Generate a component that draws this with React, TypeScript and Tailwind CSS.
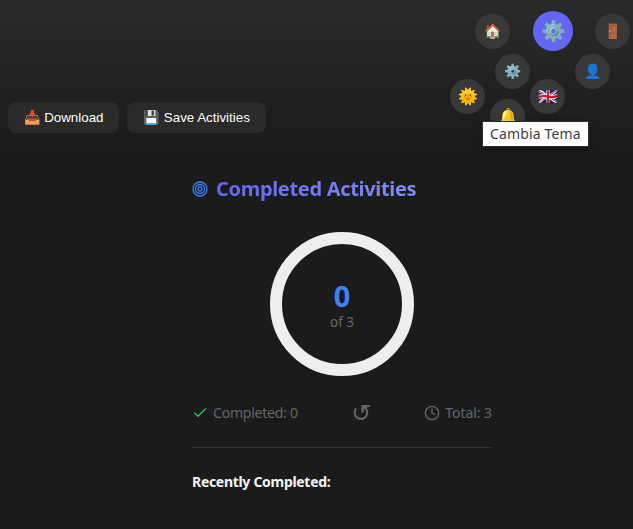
import { Check, Clock } from "lucide-react";

const menuItems = [
  { icon: "🏠", label: "Home", place: "left-[475.4px] top-[13.5px]", size: "text-[14px]" },
  { icon: "🚪", label: "Logout", place: "left-[595.4px] top-[13.5px]", size: "text-[14px]" },
  { icon: "⚙️", label: "Settings", place: "left-[495.4px] top-[53.5px]", size: "text-[14px]" },
  { icon: "👤", label: "Profile", place: "left-[575.4px] top-[53.5px]", size: "text-[14px]" },
  { icon: "🌞", label: "Theme", place: "left-[450.4px] top-[78.5px]", size: "text-[16px]" },
  { icon: "🇬🇧", label: "Language", place: "left-[530.4px] top-[78.5px]", size: "text-[16px]" },
  { icon: "🔔", label: "Notifications", place: "left-[490.4px] top-[98.5px]", size: "text-[16px]" },
];

function FloatingMenu() {
  return (
    <nav>
      {menuItems.map((item) => (
        <button
          key={item.label}
          aria-label={item.label}
          className={`absolute flex size-[35px] items-center justify-center rounded-full bg-[#383838] leading-none ${item.place} ${item.size}`}
        >
          {item.icon}
        </button>
      ))}
      <button
        aria-label="Menu"
        className="absolute left-[533px] top-[11px] flex size-10 items-center justify-center rounded-full bg-[#6366f1] text-[20px] leading-none"
      >
        ⚙️
      </button>
      <div
        role="tooltip"
        className="absolute left-[482px] top-[121px] flex h-[26px] w-[107px] items-center whitespace-nowrap border border-[#303030] bg-white pb-px pl-[7px] text-[14px] tracking-[0.15px] text-[#3d3d3d] shadow-[0_3px_8px_rgba(0,0,0,0.25)]"
      >
        Cambia Tema
      </div>
    </nav>
  );
}

function TargetIcon() {
  return (
    <svg className="size-4 shrink-0" viewBox="0 0 16 16" fill="none" stroke="#3b82f6" strokeWidth="1.3">
      <circle cx="8" cy="8" r="7" />
      <circle cx="8" cy="8" r="4.5" />
      <circle cx="8" cy="8" r="2" />
    </svg>
  );
}

function ResetIcon() {
  return (
    <svg className="h-4 w-[17px] shrink-0" viewBox="0 0 17 16" fill="none" stroke="#666666" strokeWidth="2.1">
      <path d="M3.3 3.4A6.3 6.3 0 1 0 12.4 3.2" />
      <path d="M8.4 0H16.8V1.8L13.4 2.8L10.8 4.4V7.6H8.4Z" fill="#666666" stroke="none" />
    </svg>
  );
}

export default function App() {
  return (
    <div className="relative h-[529px] w-[633px] overflow-hidden bg-[#1b1b1b] bg-[linear-gradient(to_bottom,#2a2a2a_0px,#1b1b1b_150px)] font-['Noto_Sans',sans-serif]">
      <div className="flex gap-2 pl-2 pt-[102px] font-['Liberation_Sans',sans-serif] text-[13.333px] leading-[15px] text-white">
        <button className="flex h-[31px] w-[111px] items-center justify-center whitespace-pre rounded-lg bg-[#2a2a2a]">
          📥 Download
        </button>
        <button className="flex h-[31px] w-[139px] items-center justify-center whitespace-pre rounded-lg bg-[#2a2a2a]">
          💾 Save Activities
        </button>
      </div>

      <section className="ml-[172px] mt-[22px] h-[357px] w-[340px] rounded-xl px-5 pt-5 shadow-[0_2px_4px_rgba(0,0,0,0.06)]">
        <header className="flex h-7 items-center gap-2">
          <TargetIcon />
          <h2 className="whitespace-nowrap bg-gradient-to-r from-[#6366f1] to-[#818cf8] bg-clip-text text-[20px] font-bold leading-7 tracking-[-0.32px] text-transparent">
            Completed Activities
          </h2>
        </header>

        <div className="mx-auto mt-[29px] flex size-36 flex-col items-center rounded-full border-[12px] border-[#eeeeee] pt-[36px]">
          <span className="text-[29px] font-bold leading-8 text-[#3b82f6]">0</span>
          <span className="text-[13.5px] leading-5 text-[#666666]">of 3</span>
        </div>

        <div className="mt-[26px] flex h-[22px] items-center justify-between text-[14px] text-[#666666]">
          <div className="flex items-center gap-[5px]">
            <Check size={16} color="#22c55e" strokeWidth={2} />
            <span className="-mt-0.5 tracking-[-0.22px]">Completed: 0</span>
          </div>
          <ResetIcon />
          <div className="flex items-center gap-[5px]">
            <Clock size={16} strokeWidth={2} />
            <span className="-mt-0.5 tracking-[-0.05px]">Total: 3</span>
          </div>
        </div>

        <div className="mt-[23px] border-t border-[#333333] pt-6">
          <h3 className="whitespace-nowrap text-[14px] font-bold leading-5 tracking-[-0.3px] text-[#f5f5f5]">
            Recently Completed:
          </h3>
        </div>
      </section>

      <FloatingMenu />
    </div>
  );
}
